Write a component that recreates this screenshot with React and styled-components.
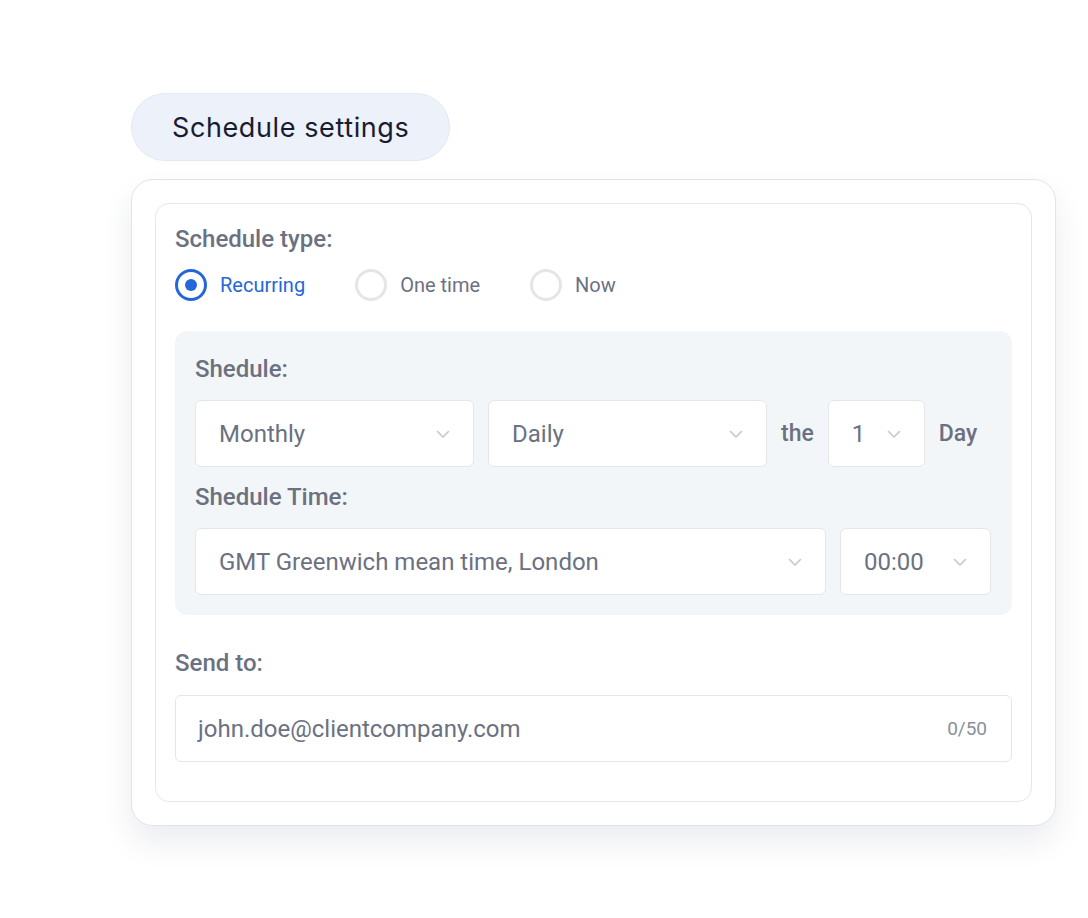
import styled, { createGlobalStyle } from "styled-components";

const GlobalStyle = createGlobalStyle`
  html, body {
    margin: 0;
    padding: 0;
    background: #ffffff;
  }
  * {
    box-sizing: border-box;
  }
`;

const Chevron = () => (
  <svg width="16" height="16" viewBox="0 0 16 16" fill="none">
    <path
      d="M2.5 5.5l5.5 5.5 5.5-5.5"
      stroke="#c3c7ce"
      strokeWidth="1.6"
      strokeLinecap="round"
      strokeLinejoin="round"
    />
  </svg>
);

const Select = ({ value, width }) => (
  <SelectBox $width={width}>
    <span>{value}</span>
    <Chevron />
  </SelectBox>
);

const Radio = ({ label, checked }) => (
  <RadioItem $checked={checked}>
    <RadioDot $checked={checked} />
    <span>{label}</span>
  </RadioItem>
);

export default function App() {
  return (
    <>
      <GlobalStyle />
      <Page>
        <Pill>Schedule settings</Pill>
        <OuterCard>
          <InnerCard>
            {/* Schedule type */}
            <Label>Schedule type:</Label>
            <RadioRow>
              <Radio label="Recurring" checked />
              <Radio label="One time" />
              <Radio label="Now" />
            </RadioRow>

            {/* Grey panel with selects */}
            <Panel>
              <Label>Shedule:</Label>
              <SelectRow>
                <Select value="Monthly" width="279px" />
                <Select value="Daily" width="279px" />
                <Word>the</Word>
                <Select value="1" width="97px" />
                <Word>Day</Word>
              </SelectRow>
              <Label $mt="15px">Shedule Time:</Label>
              <SelectRow>
                <Select value="GMT Greenwich mean time, London" width="631px" />
                <Select value="00:00" width="151px" />
              </SelectRow>
            </Panel>

            {/* Recipients */}
            <Label $mt="33px">Send to:</Label>
            <TextField>
              <span>john.doe@clientcompany.com</span>
              <Counter>0/50</Counter>
            </TextField>
          </InnerCard>
        </OuterCard>
      </Page>
    </>
  );
}

const Page = styled.div`
  width: 1088px;
  height: 918px;
  padding: 93px 0 0 131px;
  display: flex;
  flex-direction: column;
  align-items: flex-start;
  gap: 18px;
  font-family: Roboto, "Liberation Sans", sans-serif;
`;

const Pill = styled.div`
  height: 68px;
  padding: 0 40px;
  display: flex;
  align-items: center;
  border-radius: 34px;
  background: #ecf1fa;
  border: 1px solid #e3e8f1;
  font-family: Inter, "Noto Sans", sans-serif;
  font-size: 27px;
  font-weight: 400;
  letter-spacing: 0.6px;
  color: #171c33;
`;

const OuterCard = styled.div`
  width: 925px;
  padding: 23px;
  border-radius: 22px;
  background: #ffffff;
  border: 1px solid #dfe5ec;
  box-shadow: 0 16px 32px rgba(30, 45, 70, 0.09);
`;

const InnerCard = styled.div`
  padding: 20px 19px 39px;
  border-radius: 14px;
  border: 1.5px solid #e5e7eb;
  display: flex;
  flex-direction: column;
`;

const Label = styled.div`
  margin-top: ${({ $mt }) => $mt || "0"};
  font-size: 24px;
  font-weight: 500;
  line-height: 30px;
  color: #6b7181;
`;

const RadioRow = styled.div`
  display: flex;
  align-items: center;
  gap: 50px;
  margin-top: 15px;
`;

const RadioItem = styled.div`
  display: flex;
  align-items: center;
  gap: 13px;
  font-size: 20px;
  color: ${({ $checked }) => ($checked ? "#2567da" : "#6b7181")};
`;

const RadioDot = styled.div`
  width: 32px;
  height: 32px;
  border-radius: 50%;
  border: 3px solid ${({ $checked }) => ($checked ? "#2567da" : "#e3e5e8")};
  display: flex;
  align-items: center;
  justify-content: center;

  &::after {
    content: "";
    display: ${({ $checked }) => ($checked ? "block" : "none")};
    width: 12px;
    height: 12px;
    border-radius: 50%;
    background: #2567da;
  }
`;

const Panel = styled.div`
  margin-top: 30px;
  padding: 23px 20px 20px;
  border-radius: 12px;
  background: #f3f6f9;
  display: flex;
  flex-direction: column;
`;

const SelectRow = styled.div`
  display: flex;
  align-items: center;
  gap: 14px;
  margin-top: 16px;
`;

const SelectBox = styled.div`
  width: ${({ $width }) => $width};
  height: 67px;
  padding: 0 22px 0 23px;
  display: flex;
  align-items: center;
  justify-content: space-between;
  gap: 14px;
  border-radius: 6px;
  background: #ffffff;
  border: 1.5px solid #e4e6ea;
  font-size: 24px;
  color: #6b7181;
`;

const Word = styled.span`
  font-size: 23px;
  font-weight: 500;
  color: #6b7181;
`;

const TextField = styled.div`
  margin-top: 17px;
  height: 67px;
  padding: 0 24px 0 22px;
  display: flex;
  align-items: center;
  justify-content: space-between;
  border-radius: 6px;
  border: 1.5px solid #e4e6ea;
  font-size: 24px;
  color: #6b7181;
`;

const Counter = styled.span`
  font-size: 19px;
  color: #8a8f9b;
`;
